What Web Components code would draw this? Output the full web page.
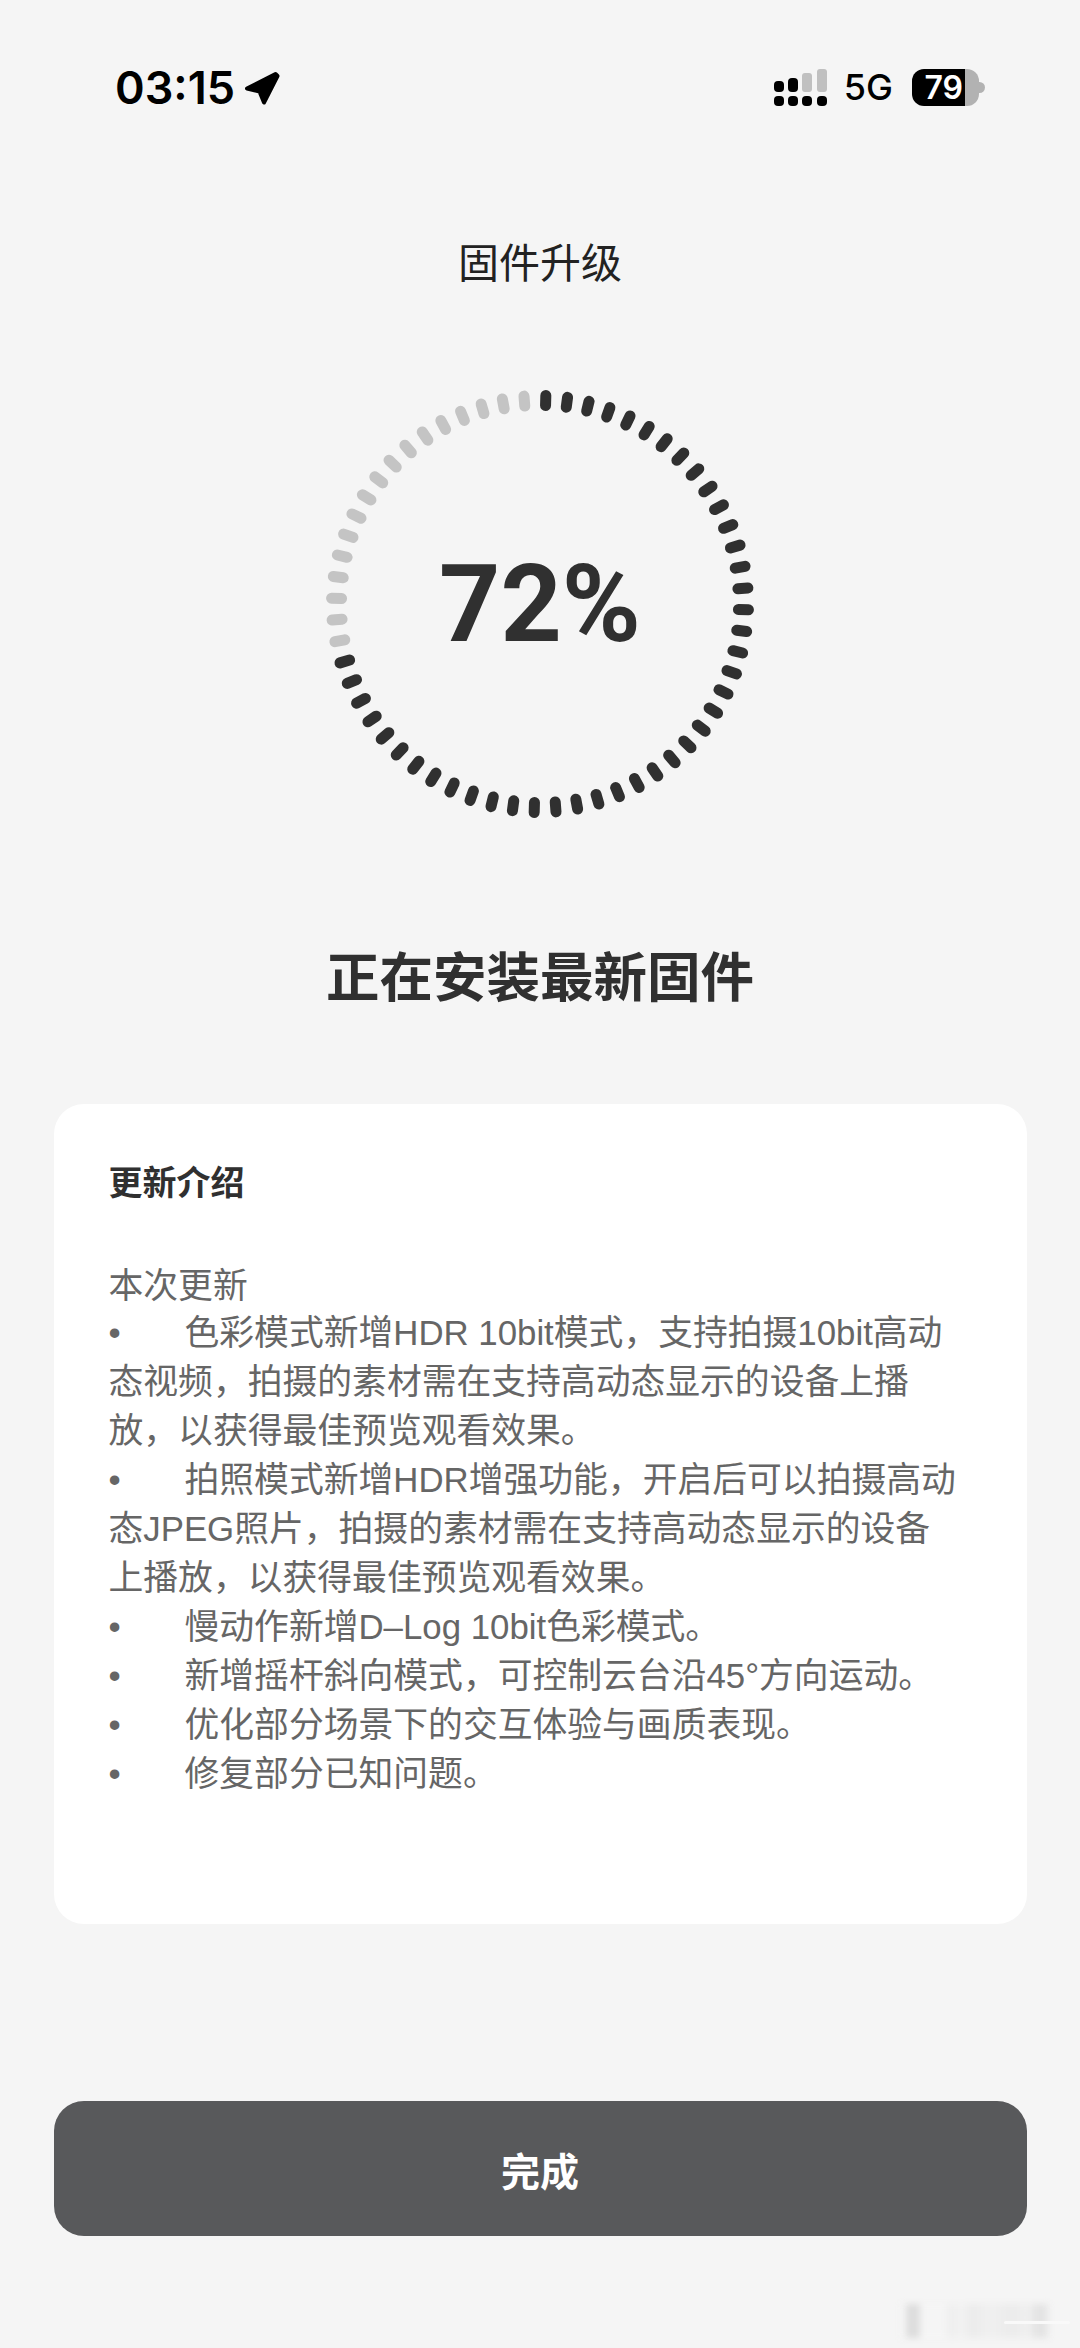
<!DOCTYPE html>
<html lang="zh">
<head>
<meta charset="utf-8">
<title>固件升级</title>
<style>
    html, body { margin: 0; padding: 0; }
    body {
        position: relative;
        width: 1080px;
        height: 2348px;
        overflow: hidden;
        background: #f5f5f5;
        font-family: "Noto Sans CJK SC", sans-serif;
        display: flex;
        flex-direction: column;
        align-items: center;
    }
</style>
</head>
<body>
<status-bar time="03:15" battery="79"></status-bar>
<page-title>固件升级</page-title>
<progress-ring value="72"></progress-ring>
<install-heading>正在安装最新固件</install-heading>
<update-card heading="更新介绍">
    <div>本次更新</div>
    <update-item>•&#9;色彩模式新增HDR 10bit模式，支持拍摄10bit高动态视频，拍摄的素材需在支持高动态显示的设备上播放，以获得最佳预览观看效果。</update-item>
    <update-item>•&#9;拍照模式新增HDR增强功能，开启后可以拍摄高动态JPEG照片，拍摄的素材需在支持高动态显示的设备上播放，以获得最佳预览观看效果。</update-item>
    <update-item>•&#9;慢动作新增D–Log 10bit色彩模式。</update-item>
    <update-item>•&#9;新增摇杆斜向模式，可控制云台沿45°方向运动。</update-item>
    <update-item>•&#9;优化部分场景下的交互体验与画质表现。</update-item>
    <update-item>•&#9;修复部分已知问题。</update-item>
</update-card>
<done-button>完成</done-button>
<blur-mark></blur-mark>

<script>
// Small helper, every component has its own shadow root
function shadow(el, html) {
    el.attachShadow({ mode: 'open' });
    const template = document.createElement('template');
    template.innerHTML = html;
    el.shadowRoot.appendChild(template.content.cloneNode(true));
}

class StatusBar extends HTMLElement {
    constructor() {
        super();
        const time = this.getAttribute('time');
        const battery = this.getAttribute('battery');
        shadow(this, /*html*/`
            <style>
                :host {
                    box-sizing: border-box;
                    display: flex;
                    align-items: center;
                    width: 100%;
                    height: 37px;
                    margin-top: 69px;
                    padding: 0 95px 0 115px;
                    color: #000;
                }
                .time {
                    font: 600 45px/37px Inter, "Liberation Sans", sans-serif;
                }
                .arrow { width: 36px; height: 36px; margin-left: 9px; }
                .right { margin-left: auto; display: flex; align-items: center; }
                .signal { width: 53px; height: 37px; display: block; }
                .net {
                    font: 500 36px/37px Inter, "Liberation Sans", sans-serif;
                    margin-left: 17px;
                }
                .battery {
                    box-sizing: border-box;
                    width: 67px;
                    height: 37px;
                    margin-left: 19px;
                    padding-right: 16px;
                    border-radius: 12px;
                    background: linear-gradient(90deg, #000 53px, #b2b2b2 53px);
                    color: #fff;
                    font: 600 32px/37px Inter, "Liberation Sans", sans-serif;
                    text-align: right;
                }
                .nub {
                    width: 6px;
                    height: 11px;
                    border-radius: 0 6px 6px 0;
                    background: #b2b2b2;
                }
            </style>
            <span class="time">${time}</span>
            <svg class="arrow" viewBox="0 0 36 36">
                <path d="M3 18.5 31.5 4 33.5 6 20 32.5 15.5 21.5Z" fill="#000" stroke="#000" stroke-width="4" stroke-linejoin="round"/>
            </svg>
            <div class="right">
                <svg class="signal" viewBox="0 0 53 37">
                    <rect x="0" y="27" width="10" height="10" rx="4"/>
                    <rect x="14" y="27" width="10" height="10" rx="4"/>
                    <rect x="28" y="27" width="10" height="10" rx="4"/>
                    <rect x="43" y="27" width="10" height="10" rx="4"/>
                    <rect x="0" y="12" width="10" height="11" rx="4"/>
                    <rect x="14" y="9" width="10" height="14" rx="4"/>
                    <rect x="28" y="4" width="10" height="19" rx="3" fill="#c0c0c0"/>
                    <rect x="43" y="0" width="10" height="23" rx="3" fill="#c0c0c0"/>
                </svg>
                <span class="net">5G</span>
                <div class="battery">${battery}</div>
                <div class="nub"></div>
            </div>
        `);
    }
}

class PageTitle extends HTMLElement {
    constructor() {
        super();
        shadow(this, /*html*/`
            <style>
                :host {
                    display: block;
                    margin-top: 126px;
                    font-size: 41px;
                    line-height: 56px;
                    color: #222;
                }
            </style>
            <slot></slot>
        `);
    }
}

class ProgressRing extends HTMLElement {
    constructor() {
        super();
        const value = Number(this.getAttribute('value'));
        // 60 ticks, the first one sits a bit right of 12 o'clock
        const darkCount = 43;
        let ticks = '';
        for (let i = 0; i < 60; i++) {
            const color = i < darkCount ? '#303030' : '#c4c4c4';
            ticks += `<line x1="214" y1="5.5" x2="214" y2="15.5" stroke="${color}" transform="rotate(${1.6 + i * 6} 214 214)"/>`;
        }
        shadow(this, /*html*/`
            <style>
                :host {
                    display: grid;
                    place-items: center;
                    width: 428px;
                    height: 428px;
                    margin-top: 102px;
                }
                svg, .value { grid-area: 1 / 1; }
                svg { display: block; }
                line { stroke-width: 11; stroke-linecap: round; }
                .value {
                    font: 700 107px/1 Roboto, "Liberation Sans", sans-serif;
                    color: #303030;
                }
            </style>
            <svg width="428" height="428" viewBox="0 0 428 428">${ticks}</svg>
            <span class="value">${value}%</span>
        `);
    }
}

class InstallHeading extends HTMLElement {
    constructor() {
        super();
        shadow(this, /*html*/`
            <style>
                :host {
                    display: block;
                    margin-top: 120px;
                    font-size: 53.5px;
                    line-height: 72px;
                    font-weight: 700;
                    color: #303030;
                }
            </style>
            <slot></slot>
        `);
    }
}

class UpdateCard extends HTMLElement {
    constructor() {
        super();
        shadow(this, /*html*/`
            <style>
                :host {
                    box-sizing: border-box;
                    display: block;
                    width: 973px;
                    height: 820px;
                    margin-top: 94px;
                    padding: 52px 68px 0 55px;
                    border-radius: 30px;
                    background: #fff;
                }
                h2 {
                    margin: 0 0 53px;
                    font-size: 34px;
                    line-height: 50px;
                    font-weight: 700;
                    color: #303030;
                }
                .body {
                    font-size: 34.8px;
                    line-height: 49px;
                    color: #666;
                }
            </style>
            <h2>${this.getAttribute('heading')}</h2>
            <div class="body"><slot></slot></div>
        `);
    }
}

class UpdateItem extends HTMLElement {
    constructor() {
        super();
        // no whitespace around the slot: the host keeps white space for its tab
        shadow(this, `<style>
                /* the bullet and the text are one string with a tab */
                :host {
                    display: block;
                    font-family: "Liberation Sans", "Noto Sans CJK SC", sans-serif;
                    white-space: pre-wrap;
                    tab-size: 76px;
                }
            </style><slot></slot>`);
    }
}

class DoneButton extends HTMLElement {
    constructor() {
        super();
        shadow(this, /*html*/`
            <style>
                :host {
                    display: flex;
                    align-items: center;
                    justify-content: center;
                    width: 973px;
                    height: 135px;
                    margin-top: 177px;
                    border-radius: 30px;
                    background: #58595b;
                    color: #fff;
                    font-size: 39px;
                    font-weight: 700;
                }
            </style>
            <slot></slot>
        `);
    }
}

// Blurred-out watermark in the bottom corner of the screenshot
class BlurMark extends HTMLElement {
    constructor() {
        super();
        shadow(this, /*html*/`
            <style>
                :host {
                    position: absolute;
                    left: 900px;
                    top: 2304px;
                    width: 172px;
                    height: 34px;
                }
                .smudge {
                    height: 100%;
                    width: 150px;
                    filter: blur(3px);
                    background: linear-gradient(90deg,
                        #f5f5f5 4px, #dddddd 8px, #dddddd 18px, #f5f5f5 22px,
                        #f5f5f5 44px, #eeeeee 50px, #f2f2f2 62px, #ebebeb 72px,
                        #f0f0f0 90px, #ebebeb 112px, #f0f0f0 128px, #e4e4e4 136px, #e4e4e4 146px, #f5f5f5 150px);
                }
                .line {
                    position: absolute;
                    left: 104px;
                    top: 17px;
                    width: 66px;
                    height: 3px;
                    border-radius: 2px;
                    background: #f9f9f9;
                }
            </style>
            <div class="smudge"></div>
            <div class="line"></div>
        `);
    }
}

customElements.define('status-bar', StatusBar);
customElements.define('page-title', PageTitle);
customElements.define('progress-ring', ProgressRing);
customElements.define('install-heading', InstallHeading);
customElements.define('update-card', UpdateCard);
customElements.define('update-item', UpdateItem);
customElements.define('done-button', DoneButton);
customElements.define('blur-mark', BlurMark);
</script>
</body>
</html>
